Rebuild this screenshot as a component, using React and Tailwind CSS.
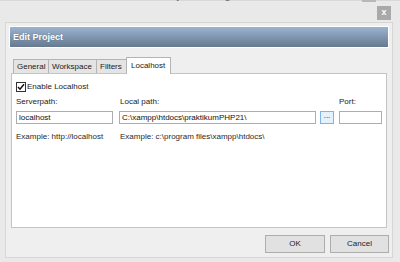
import React from 'react';

function CheckBox() {
  return (
    <span className="w-[10px] h-[10px] border border-[#333] bg-white flex items-center justify-center">
      <svg width="8" height="8" viewBox="0 0 8 8">
        <path d="M1 4 L3 6.2 L7 1.2" fill="none" stroke="#111" strokeWidth="1.5" />
      </svg>
    </span>
  );
}

function Field({ value, className }) {
  return (
    <div className={`h-[13px] border border-[#abadb3] bg-white flex items-center pl-[2px] text-[#111] whitespace-nowrap overflow-hidden ${className}`}>
      {value}
    </div>
  );
}

export default function App() {
  const tabs = [
    { label: 'General', w: 'w-[36px]' },
    { label: 'Workspace', w: 'w-[49px]' },
    { label: 'Filters', w: 'w-[31px]' },
  ];

  return (
    <div className="w-[400px] h-[262px] bg-[#e9e9e9] flex flex-col overflow-hidden relative text-[8px] text-[#2a2a2a] font-['Liberation_Sans',Arial,sans-serif] leading-none">
      {/* cut-off title of the window behind */}
      <span className="absolute left-[160px] top-[-10px] text-[11px] text-[#6b6b6b]">Project Manager</span>
      <span className="absolute left-[362px] top-0 w-[14px] h-[2px] bg-[#b8b8b8]"></span>

      {/* top strip with close button */}
      <div className="h-[22px] flex justify-end pt-[5px] pr-[9px] border-t border-[#d8d8d8]">
        <button className="w-[14px] h-[14px] bg-[#a9a9a9] text-white text-[9px] font-bold flex items-center justify-center pb-[1px]">
          x
        </button>
      </div>

      {/* dialog frame */}
      <div className="ml-[5px] mr-[7px] h-[236px] border border-[#d6d6d6] bg-[#efefef] flex flex-col">
        {/* header */}
        <div className="mt-[3px] mx-[3px] h-[22px] border border-white bg-gradient-to-b from-[#9ab4d1] to-[#66798f] flex items-center pl-[3px]">
          <span className="text-white font-bold text-[9px] [text-shadow:0_0_1px_rgba(0,0,0,0.3)]">Edit Project</span>
        </div>

        {/* tabs */}
        <div className="mt-[9px] mx-[5px] h-[16px] flex items-end pl-[2px]">
          {tabs.map((t) => (
            <div
              key={t.label}
              className={`${t.w} h-[14px] -mr-px border border-b-0 border-[#b4b4b4] bg-[#e4e4e4] flex items-center pl-[3px] text-[#222]`}
            >
              {t.label}
            </div>
          ))}
          <div className="w-[45px] h-[17px] -mb-px relative z-10 border border-b-0 border-[#b4b4b4] bg-white flex items-center pl-[4px] text-[#222]">
            Localhost
          </div>
        </div>

        {/* tab panel */}
        <div className="mx-[5px] h-[155px] border border-[#c4c4c4] bg-white pt-[7px] pl-[4px]">
          <div className="flex items-center gap-[1px] h-[11px]">
            <CheckBox />
            <span className="text-[#222]">Enable Localhost</span>
          </div>

          <div className="flex mt-[4px]">
            <div className="w-[97px] flex flex-col">
              <span className="h-[10px] mt-[1px] flex items-center text-[#222]">Serverpath:</span>
              <Field value="localhost" className="mt-[4px]" />
              <span className="mt-[8px] h-[10px] flex items-center">Example: http://localhost</span>
            </div>
            <div className="w-[197px] ml-[6px] flex flex-col">
              <span className="h-[10px] mt-[1px] pl-[1px] flex items-center text-[#222]">Local path:</span>
              <Field value="C:\xampp\htdocs\praktikumPHP21\" className="mt-[4px]" />
              <span className="mt-[8px] h-[10px] pl-[1px] flex items-center">Example: c:\program files\xampp\htdocs\</span>
            </div>
            <div className="ml-[4px] flex flex-col">
              <span className="h-[10px] mt-[1px]"></span>
              <button className="mt-[4px] w-[14px] h-[13px] border border-[#7eb4ea] bg-[#e5f1fb] flex items-end justify-center pb-[3px] text-[#222] text-[8px]">
                ...
              </button>
            </div>
            <div className="w-[43px] ml-[5px] flex flex-col">
              <span className="h-[10px] mt-[1px] flex items-center text-[#222]">Port:</span>
              <Field value="" className="mt-[4px]" />
            </div>
          </div>
        </div>

        {/* buttons */}
        <div className="mt-[7px] mr-[3px] flex justify-end gap-[5px]">
          <button className="w-[60px] h-[18px] border border-[#adadad] bg-[#e1e1e1] text-[#222] flex items-center justify-center">
            OK
          </button>
          <button className="w-[59px] h-[18px] border border-[#adadad] bg-[#e1e1e1] text-[#222] flex items-center justify-center">
            Cancel
          </button>
        </div>
      </div>
    </div>
  );
}
